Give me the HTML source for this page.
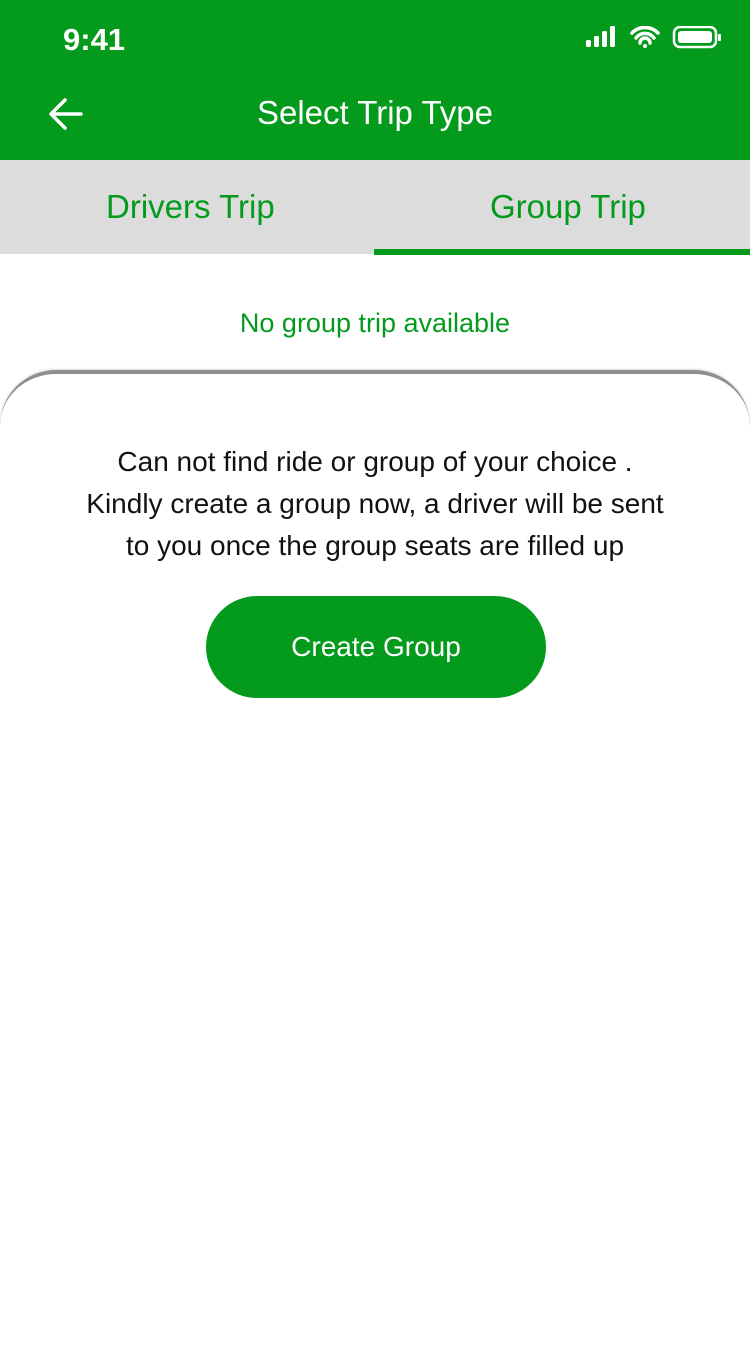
<!DOCTYPE html>
<html><head><meta charset="utf-8"><style>
*{margin:0;padding:0;box-sizing:border-box}
body{width:750px;height:1334px;background:#fff;font-family:"Liberation Sans",sans-serif;position:relative;overflow:hidden}
.hdr{position:absolute;left:0;top:0;width:750px;height:160px;background:#049A1C;color:#fff}
.time{position:absolute;left:63px;top:22px;font-size:31px;font-weight:bold}
.title{position:absolute;left:0;width:750px;top:94px;text-align:center;font-size:33px}
.tabs{position:absolute;top:160px;left:0;width:750px;height:94px;background:#dcdcdc}
.tab{position:absolute;top:188px;font-size:33px;color:#049A1C}
.ul{position:absolute;left:374px;top:249px;width:376px;height:6px;background:#049A1C}
.none{position:absolute;top:308px;width:750px;text-align:center;color:#049A1C;font-size:27px}
.card{position:absolute;left:0;top:370px;width:750px;height:1000px;border-top:4px solid #8e8e93;border-radius:56px 56px 0 0;background:#fff;box-shadow:0 -1px 2px rgba(0,0,0,.15)}
.msg{position:absolute;top:441px;width:750px;text-align:center;font-size:28px;line-height:42px;color:#111}
.btn{position:absolute;left:206px;top:596px;width:340px;height:102px;border-radius:51px;background:#049A1C;color:#fff;font-size:28px;text-align:center;line-height:102px}
</style></head><body>
<div class="hdr">
<div class="time">9:41</div>
<svg style="position:absolute;left:586px;top:26px" width="136" height="24" viewBox="0 0 136 24">
<rect x="0" y="14" width="5" height="7" rx="1.5" fill="#fff"/><rect x="8" y="10" width="5" height="11" rx="1.5" fill="#fff"/><rect x="16" y="5" width="5" height="16" rx="1.5" fill="#fff"/><rect x="24" y="0" width="5" height="21" rx="1.5" fill="#fff"/>
<path d="M46 7a18 18 0 0 1 26 0M50 12a11 11 0 0 1 18 0M54 17a5 5 0 0 1 10 0" stroke="#fff" stroke-width="3.5" fill="none" stroke-linecap="round"/><circle cx="59" cy="20" r="2" fill="#fff"/>
<rect x="88" y="1" width="42" height="20" rx="6" stroke="#fff" stroke-width="2.5" fill="none"/><rect x="92" y="5" width="34" height="12" rx="3" fill="#fff"/><rect x="132" y="8" width="3" height="7" rx="1" fill="#fff"/>
</svg>
<svg style="position:absolute;left:48px;top:97px" width="36" height="34" viewBox="0 0 36 34"><path d="M33 17H4M17 3L3 17l14 14" stroke="#fff" stroke-width="3.5" fill="none" stroke-linecap="round" stroke-linejoin="round"/></svg>
<div class="title">Select Trip Type</div>
</div>
<div class="tabs"></div>
<div class="tab" style="left:106px">Drivers Trip</div>
<div class="tab" style="left:490px">Group Trip</div>
<div class="ul"></div>
<div class="none">No group trip available</div>
<div class="card"></div>
<div class="msg">Can not find ride or group of your choice .<br>Kindly create a group now, a driver will be sent<br>to you once the group seats are filled up</div>
<div class="btn">Create Group</div>
</body></html>
